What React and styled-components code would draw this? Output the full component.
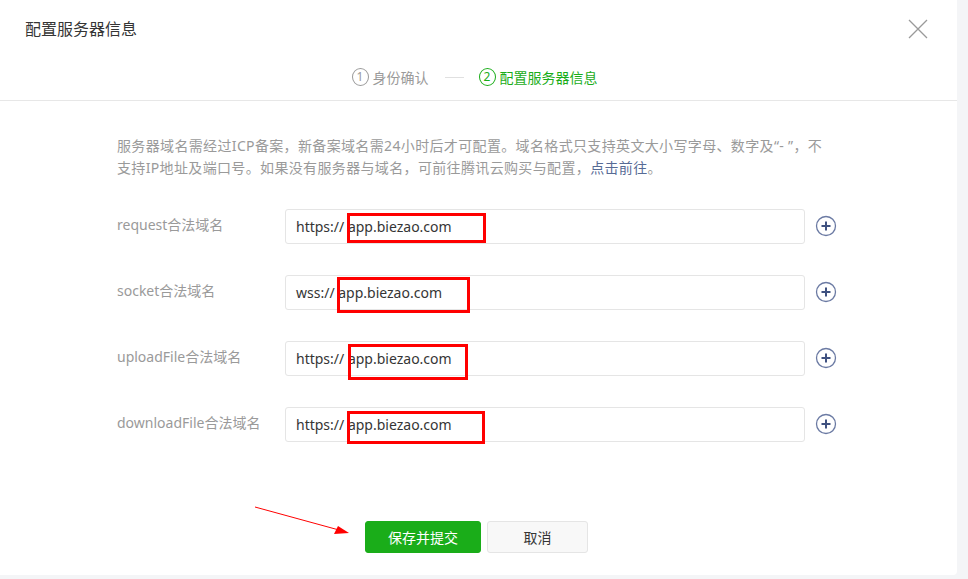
import React from "react";
import styled, { createGlobalStyle } from "styled-components";

const GlobalStyle = createGlobalStyle`
  html, body {
    margin: 0;
    padding: 0;
    background: #f4f5f7;
  }
  body {
    font-family: "Noto Sans", "Noto Sans CJK SC", sans-serif;
    -webkit-font-smoothing: antialiased;
  }
`;

const Page = styled.div`
  width: 968px;
  height: 579px;
  overflow: hidden;
  background: #f4f5f7;
`;

const Dialog = styled.div`
  position: relative;
  width: 957px;
  height: 575px;
  background: #fff;
  border-radius: 0 0 4px 0;
  display: flex;
  flex-direction: column;
`;

const Header = styled.div`
  border-bottom: 1px solid #e7e7e7;
  height: 101px;
  box-sizing: border-box;
  display: flex;
  flex-direction: column;
`;

const TitleBar = styled.div`
  height: 58px;
  display: flex;
  align-items: center;
  justify-content: space-between;
  padding: 0 28px 0 25px;
`;

const Title = styled.h1`
  margin: 0;
  font-size: 16px;
  font-weight: 400;
  color: #353535;
  line-height: 20px;
`;

const CloseBtn = styled.button`
  border: 0;
  background: none;
  padding: 0;
  width: 22px;
  height: 22px;
  cursor: pointer;
  display: flex;
  align-items: center;
  justify-content: center;
`;

const Steps = styled.div`
  display: flex;
  align-items: center;
  justify-content: center;
  height: 38px;
  padding-right: 8px;
  font-size: 14px;
`;

const Step = styled.div`
  display: flex;
  align-items: center;
  color: ${(p) => (p.active ? "#1aad19" : "#9a9a9a")};
`;

const StepNum = styled.span`
  width: 15px;
  height: 16px;
  border: 1px solid currentColor;
  border-radius: 50%;
  display: inline-flex;
  align-items: center;
  justify-content: center;
  font-size: 12px;
  line-height: 1;
  margin-right: 4px;
`;

const StepLine = styled.span`
  width: 19px;
  height: 1px;
  background: #e0e0e0;
  margin: 0 15px 0 16px;
`;

const Body = styled.div`
  padding: 34px 0 0 117px;
  display: flex;
  flex-direction: column;
`;

const Desc = styled.p`
  margin: 0;
  width: 712px;
  font-size: 14px;
  line-height: 22px;
  letter-spacing: 0.35px;
  color: #9a9a9a;
`;

const Link = styled.a`
  color: #576b95;
  text-decoration: none;
`;

const Form = styled.div`
  margin-top: 30px;
  display: flex;
  flex-direction: column;
  gap: 31px;
`;

const Row = styled.div`
  display: flex;
  align-items: center;
  height: 35px;
`;

const Label = styled.label`
  width: 168px;
  font-size: 14px;
  color: #9a9a9a;
  margin-top: -5px;
`;

const InputBox = styled.div`
  position: relative;
  width: 520px;
  height: 35px;
  box-sizing: border-box;
  border: 1px solid #e5e5e5;
  border-radius: 3px;
  display: flex;
  align-items: center;
  padding-left: 10px;
  font-size: 14px;
  color: #353535;
`;

const Prefix = styled.span`
  white-space: pre;
`;

const Mark = styled.span`
  position: absolute;
  left: ${(p) => p.x}px;
  top: ${(p) => p.y}px;
  width: ${(p) => p.w}px;
  height: ${(p) => p.h}px;
  box-sizing: border-box;
  border: 3px solid #ff0000;
  pointer-events: none;
`;

const AddBtn = styled.button`
  border: 0;
  background: none;
  padding: 0;
  margin-left: 10px;
  margin-top: -2px;
  width: 22px;
  height: 22px;
  cursor: pointer;
  display: flex;
`;

const Footer = styled.div`
  position: relative;
  margin-top: 79px;
  display: flex;
  justify-content: center;
  gap: 6px;
  padding-right: 4px;
`;

const Button = styled.button`
  width: ${(p) => (p.primary ? "116px" : "101px")};
  height: 32px;
  border-radius: 3px;
  font-family: inherit;
  font-size: 14px;
  cursor: pointer;
  border: 1px solid ${(p) => (p.primary ? "#1aad19" : "#e5e5e5")};
  background: ${(p) => (p.primary ? "#1aad19" : "#f8f8f8")};
  color: ${(p) => (p.primary ? "#fff" : "#353535")};
`;

const Arrow = styled.svg`
  position: absolute;
  left: 255px;
  top: -14px;
  overflow: visible;
`;

const rows = [
  { label: "request合法域名", prefix: "https:// ", mark: { x: 61, y: 3, w: 139, h: 30 } },
  { label: "socket合法域名", prefix: "wss:// ", mark: { x: 51, y: 1, w: 133, h: 36 } },
  { label: "uploadFile合法域名", prefix: "https:// ", mark: { x: 62, y: 2, w: 120, h: 36 } },
  { label: "downloadFile合法域名", prefix: "https:// ", mark: { x: 61, y: 3, w: 138, h: 33 } },
];

function PlusIcon() {
  return (
    <svg width="22" height="22" viewBox="0 0 22 22">
      <circle cx="11" cy="11" r="9.5" fill="none" stroke="#6b7aa3" strokeWidth="1.3" />
      <path d="M11 6.5v9M6.5 11h9" stroke="#3f5180" strokeWidth="2" />
    </svg>
  );
}

export default function App() {
  return (
    <Page>
      <GlobalStyle />
      <Dialog>
        <Header>
          <TitleBar>
            <Title>配置服务器信息</Title>
            <CloseBtn aria-label="关闭">
              <svg width="20" height="20" viewBox="0 0 20 20">
                <path d="M1 1l18 18M19 1L1 19" stroke="#9a9a9a" strokeWidth="1.3" />
              </svg>
            </CloseBtn>
          </TitleBar>
          <Steps>
            <Step>
              <StepNum>1</StepNum>身份确认
            </Step>
            <StepLine />
            <Step active>
              <StepNum>2</StepNum>配置服务器信息
            </Step>
          </Steps>
        </Header>
        <Body>
          <Desc>
            服务器域名需经过ICP备案，新备案域名需24小时后才可配置。域名格式只支持英文大小写字母、数字及“- ”，不支持IP地址及端口号。如果没有服务器与域名，可前往腾讯云购买与配置，
            <Link href="#">点击前往</Link>。
          </Desc>
          <Form>
            {rows.map((r) => (
              <Row key={r.label}>
                <Label>{r.label}</Label>
                <InputBox>
                  <Prefix>{r.prefix}</Prefix>app.biezao.com
                  <Mark {...r.mark} />
                </InputBox>
                <AddBtn aria-label="添加">
                  <PlusIcon />
                </AddBtn>
              </Row>
            ))}
          </Form>
        </Body>
        <Footer>
          <Arrow width="96" height="30">
            <line x1="0" y1="0" x2="84" y2="23" stroke="#ff0000" strokeWidth="1" />
            <polygon points="94,26 79,27 83,19" fill="#ff0000" />
          </Arrow>
          <Button primary>保存并提交</Button>
          <Button>取消</Button>
        </Footer>
      </Dialog>
    </Page>
  );
}
